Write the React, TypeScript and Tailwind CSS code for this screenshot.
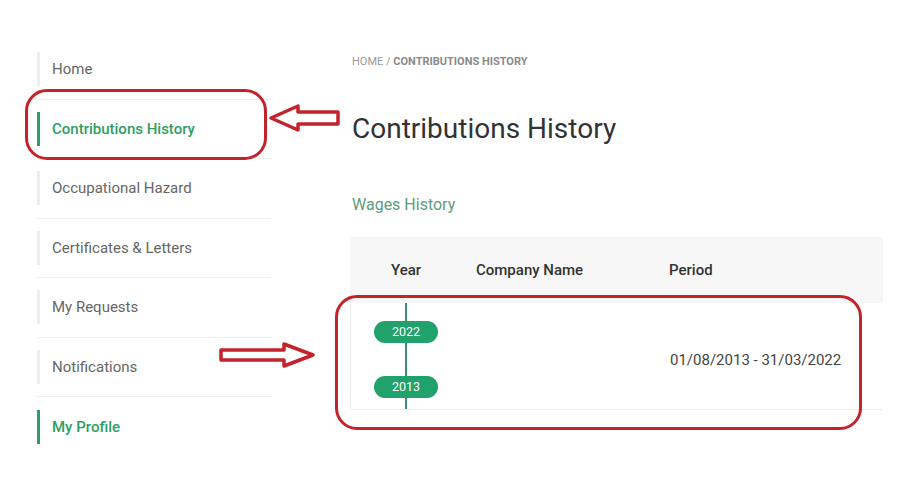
import React from "react";

const items = [
  { label: "Home", active: false },
  { label: "Contributions History", active: true },
  { label: "Occupational Hazard", active: false },
  { label: "Certificates & Letters", active: false },
  { label: "My Requests", active: false },
  { label: "Notifications", active: false },
  { label: "My Profile", active: true },
];

export default function App() {
  return (
    <div
      className="relative w-[911px] h-[504px] bg-white overflow-hidden"
      style={{ fontFamily: "Roboto, 'Liberation Sans', sans-serif" }}
    >
      <div className="flex pl-[37px]">
        {/* Sidebar */}
        <div className="w-[234px] pt-[40px] flex flex-col">
          {items.map((it, i) => (
            <div
              key={it.label}
              className={`h-[59.5px] flex items-center ${i < items.length - 1 ? "border-b border-[#f0f0f0]" : ""}`}
            >
              <div
                className={`h-[34px] flex items-center pl-[12px] border-l-[3px] ${
                  it.active ? "border-[#2f9e63]" : "border-[#eeeeee]"
                }`}
              >
                <span
                  className={`text-[15px] ${
                    it.active ? "text-[#2f9e63] font-medium" : "text-[#666666]"
                  }`}
                >
                  {it.label}
                </span>
              </div>
            </div>
          ))}
        </div>

        {/* Main */}
        <div className="ml-[79px] w-[533px] flex flex-col">
          <div className="pt-[55px] h-[67px] text-[11px] leading-[13px] uppercase text-[#9a9a9a] pl-[2px]">
            Home / <span className="font-bold text-[#8a8a8a]">Contributions History</span>
          </div>
          <h1 className="mt-[45px] pl-[2px] text-[28px] leading-[34px] text-[#333333] font-normal">
            Contributions History
          </h1>
          <div className="mt-[49px] pl-[2px] text-[16px] leading-[20px] text-[#5c9c80]">
            Wages History
          </div>
          <div className="mt-[22px]">
            <div className="h-[66px] bg-[#f7f7f7] flex items-center text-[15px] font-medium text-[#333333]">
              <div className="w-[112px] pl-[41px]">Year</div>
              <div className="w-[193px] ml-[14px]">Company Name</div>
              <div>Period</div>
            </div>
            <div className="h-[107px] border-l border-b border-[#ececec] flex">
              <div className="w-[112px] relative flex flex-col items-center">
                <div className="absolute left-[54px] top-0 bottom-0 w-[2px] bg-[#3b8f6b]" />
                <div className="relative ml-[-2px] mt-[18px] w-[64px] h-[22px] rounded-full bg-[#21a16c] text-white text-[12.5px] flex items-center justify-center">
                  2022
                </div>
                <div className="relative ml-[-2px] mt-[33px] w-[64px] h-[22px] rounded-full bg-[#21a16c] text-white text-[12.5px] flex items-center justify-center">
                  2013
                </div>
              </div>
              <div className="w-[207px]" />
              <div className="flex items-center text-[15px] text-[#444444] pt-[8px]">
                01/08/2013 - 31/03/2022
              </div>
            </div>
          </div>
        </div>
      </div>

      {/* Annotations */}
      <div className="absolute left-[25px] top-[89px] w-[242px] h-[71px] border-[3px] border-[#c3232b] rounded-[22px]" />
      <div className="absolute left-[335px] top-[295px] w-[527px] h-[135px] border-[3px] border-[#c3232b] rounded-[22px]" />

      <svg className="absolute left-[268px] top-[102px]" width="74" height="32" viewBox="0 0 74 32">
        <path
          d="M3 16 L30 4 L30 10 L70 10 L70 22 L30 22 L30 28 Z"
          fill="white"
          stroke="#c3232b"
          strokeWidth="3.5"
          strokeLinejoin="round"
        />
      </svg>
      <svg className="absolute left-[218px] top-[340px]" width="100" height="30" viewBox="0 0 100 30">
        <path
          d="M3 10 L66 10 L66 4 L95 15 L66 26 L66 20 L3 20 Z"
          fill="white"
          stroke="#c3232b"
          strokeWidth="3.5"
          strokeLinejoin="round"
        />
      </svg>
    </div>
  );
}
